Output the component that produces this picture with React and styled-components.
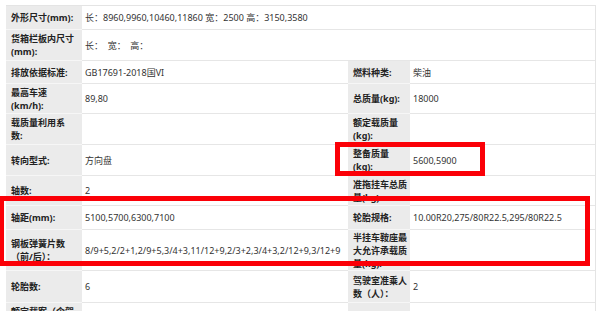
import { createGlobalStyle, styled } from "styled-components";

const GlobalStyle = createGlobalStyle`
  html, body {
    margin: 0;
    padding: 0;
    background: #fff;
  }
  body {
    font-family: "Noto Sans", "Noto Sans CJK SC", sans-serif;
  }
`;

// page wrapper, the red marks are drawn over it
const Page = styled.div`
  position: relative;
  width: 600px;
  height: 311px;
  overflow: hidden;
  padding: 5px 0 0 6px;
  box-sizing: border-box;
`;

const Table = styled.div`
  width: 590px;
  border-top: 1px solid #e4e4e4;
  border-right: 1px solid #e4e4e4;
  box-sizing: border-box;
`;

const Row = styled.div`
  display: grid;
  grid-template-columns: 76px 266px 62px 1fr;
  height: ${(p) => p.$h}px;
`;

const Label = styled.div`
  background: #ebebeb;
  color: #222;
  font-size: 9px;
  font-weight: 700;
  line-height: 13px;
  padding: 0 3px 0 5px;
  display: flex;
  flex-direction: column;
  justify-content: center;
  overflow: hidden;
  border-bottom: 1px solid #f6f6f6;
  white-space: nowrap;
`;

const Value = styled.div`
  grid-column: ${(p) => (p.$full ? "span 3" : "auto")};
  color: #333;
  font-size: 9px;
  line-height: 13px;
  padding: 0 3px;
  display: flex;
  align-items: center;
  white-space: pre;
  overflow: hidden;
  border-bottom: 1px solid #e6e6e6;
`;

const Mark = styled.div`
  position: absolute;
  top: ${(p) => p.$top}px;
  left: ${(p) => p.$left}px;
  width: ${(p) => p.$w}px;
  height: ${(p) => p.$h}px;
  border: 5px solid #fb0007;
  box-sizing: border-box;
  pointer-events: none;
`;

const rows = [
  { h: 24, label: ["外形尺寸(mm):"], value: "长：8960,9960,10460,11860 宽：2500 高：3150,3580", full: true },
  { h: 31, label: ["货箱栏板内尺寸", "(mm):"], value: "长：  宽：  高：", full: true },
  { h: 23, label: ["排放依据标准:"], value: "GB17691-2018国VI", label2: ["燃料种类:"], value2: "柴油" },
  { h: 30, label: ["最高车速", "(km/h):"], value: "89,80", label2: ["总质量(kg):"], value2: "18000" },
  { h: 31, label: ["载质量利用系", "数:"], value: "", label2: ["额定载质量", "(kg):"], value2: "" },
  { h: 31, label: ["转向型式:"], value: "方向盘", label2: ["整备质量", "(kg):"], value2: "5600,5900" },
  { h: 30, label: ["轴数:"], value: "2", label2: ["准拖挂车总质", "量(kg):"], value2: "" },
  { h: 24, label: ["轴距(mm):"], value: "5100,5700,6300,7100", label2: ["轮胎规格:"], value2: "10.00R20,275/80R22.5,295/80R22.5" },
  { h: 41, label: ["钢板弹簧片数", "（前/后）："], value: "8/9+5,2/2+1,2/9+5,3/4+3,11/12+9,2/3+2,3/4+3,2/12+9,3/12+9", label2: ["半挂车鞍座最", "大允许承载质", "量(kg):"], value2: "" },
  { h: 32, label: ["轮胎数:"], value: "6", label2: ["驾驶室准乘人", "数（人）："], value2: "2" },
  { h: 31, label: ["额定载客（含驾", "驶员）（人）："], value: "", label2: [""], value2: "" },
];

const Lines = ({ lines }) => lines.map((l, i) => <span key={i}>{l}</span>);

export default function App() {
  return (
    <>
      <GlobalStyle />
      <Page>
        <Table>
          {rows.map((r, i) => (
            <Row key={i} $h={r.h}>
              <Label>
                <Lines lines={r.label} />
              </Label>
              <Value $full={r.full}>{r.value}</Value>
              {!r.full && (
                <>
                  <Label>
                    <Lines lines={r.label2} />
                  </Label>
                  <Value>{r.value2}</Value>
                </>
              )}
            </Row>
          ))}
        </Table>
        <Mark $top={142} $left={335} $w={150} $h={34} />
        <Mark $top={196} $left={-1} $w={591} $h={70} />
      </Page>
    </>
  );
}
